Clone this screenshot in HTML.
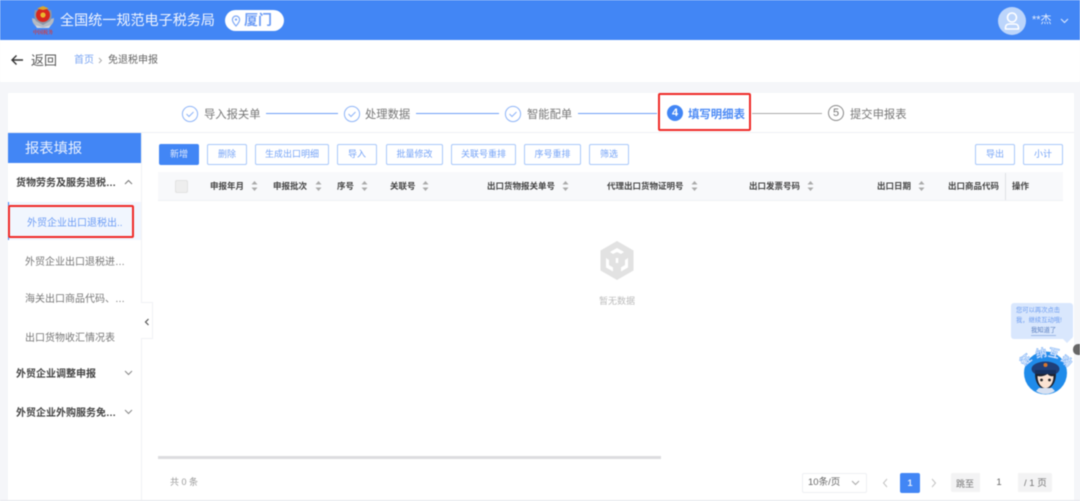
<!DOCTYPE html>
<html lang="zh">
<head>
<meta charset="utf-8">
<style>
html,body{margin:0;padding:0;width:1080px;height:501px;overflow:hidden;background:#f5f6f9;font-family:"Liberation Sans","Noto Sans CJK SC",sans-serif;}
.a{position:absolute;white-space:nowrap;}
#root{position:relative;width:1080px;height:501px;overflow:hidden;filter:blur(.45px);}
.btn{position:absolute;top:144px;height:19px;line-height:19px;border:1px solid #a9c8fa;border-radius:2px;background:#fff;color:#76a4f7;font-size:9px;text-align:center;box-sizing:content-box;}
.th{position:absolute;top:181px;font-size:8.5px;line-height:10px;color:#444;font-weight:700;white-space:nowrap;}
.st{position:absolute;font-size:11.3px;line-height:16px;color:#777;white-space:nowrap;}
.ln{position:absolute;top:113px;height:1.4px;background:#6f9ff6;}
.sort{position:absolute;top:179px;width:7px;height:14px;}
.m{position:absolute;font-size:10px;line-height:14px;color:#777;white-space:nowrap;}
.g{position:absolute;left:16px;font-size:10px;line-height:14px;color:#444;font-weight:700;white-space:nowrap;}
.arc{font-size:11px;font-weight:700;font-family:"Liberation Sans","Noto Sans CJK SC",sans-serif;fill:#f4f8ff;stroke:#7fb2f6;stroke-width:.6px;text-anchor:middle;}
</style>
</head>
<body>
<div id="root">
<!-- header -->
<div class="a" style="left:0;top:0;width:1080px;height:40px;background:#4286f5;"></div>
<svg class="a" style="left:30px;top:4px;" width="26" height="32" viewBox="0 0 26 32">
<path d="M2 14c0 6 4 10 11 10s11-4 11-10l-3 1-8 6-8-6z" fill="#b4bac4"/>
<path d="M5 6c-1 4-1 8 1 11l7 4 7-4c2-3 2-7 1-11z" fill="#8d96a5"/>
<circle cx="13" cy="11" r="7" fill="#d8281f"/>
<circle cx="13" cy="11" r="2.600" fill="#eab92e"/>
<path d="M7 4.500l6-2.500 6 2.500-6 1.500z" fill="#d9a62c"/>
<path d="M5 21l8 2.500 8-2.500-2 3H7z" fill="#d3d7dd"/>
<text x="13" y="30" text-anchor="middle" font-size="5" font-weight="700" fill="#d83a38" font-family="'Liberation Serif','Noto Serif CJK SC',serif">中国税务</text>
</svg>
<div class="a" style="left:60px;top:12px;font-size:14.100px;line-height:17px;color:#f1f5fe;">全国统一规范电子税务局</div>
<div class="a" style="left:225px;top:10px;width:59px;height:21px;border-radius:11px;background:#fff;"></div>
<svg class="a" style="left:231px;top:15px;" width="10" height="12" viewBox="0 0 10 12"><path d="M5 1a3.6 3.6 0 0 0-3.6 3.6C1.400 7 5 11 5 11s3.600-4 3.600-6.400A3.600 3.600 0 0 0 5 1z" fill="none" stroke="#7ea9f6" stroke-width="1.200"/><circle cx="5" cy="4.600" r="1.200" fill="#7ea9f6"/></svg>
<div class="a" style="left:244px;top:12px;font-size:14px;line-height:17px;color:#6c9cf5;font-weight:700;">厦门</div>
<div class="a" style="left:998px;top:7px;width:28px;height:28px;border-radius:50%;background:#bcd5fb;"></div>
<svg class="a" style="left:998px;top:7px;" width="28" height="28" viewBox="0 0 28 28"><circle cx="14" cy="10.500" r="4.500" fill="none" stroke="#fff" stroke-width="1.600"/><path d="M7.500 22v-1.500c0-2.200 1.800-3.500 4-3.500h5c2.200 0 4 1.300 4 3.500V22z" fill="none" stroke="#fff" stroke-width="1.600" stroke-linejoin="round"/></svg>
<div class="a" style="left:1032px;top:13px;font-size:11px;line-height:14px;color:#e4edfd;">**杰</div>
<svg class="a" style="left:1060px;top:18px;" width="9" height="6" viewBox="0 0 9 6"><path d="M1 1l3.500 3.500L8 1" fill="none" stroke="#dbe7fd" stroke-width="1.100"/></svg>

<!-- sub header -->
<div class="a" style="left:0;top:40px;width:1080px;height:42px;background:#fff;"></div>
<svg class="a" style="left:10px;top:54px;" width="14" height="12" viewBox="0 0 14 12"><path d="M13 6H2M6.500 1.500L2 6l4.500 4.500" fill="none" stroke="#333" stroke-width="1.400"/></svg>
<div class="a" style="left:31px;top:53px;font-size:13px;line-height:16px;color:#555;">返回</div>
<div class="a" style="left:74px;top:54px;font-size:10px;line-height:14px;color:#7ba6f3;">首页</div>
<svg class="a" style="left:98px;top:57px;" width="5" height="7" viewBox="0 0 5 7"><path d="M1 1l2.500 2.500L1 6" fill="none" stroke="#aaa" stroke-width=".9"/></svg>
<div class="a" style="left:108px;top:54px;font-size:10px;line-height:14px;color:#666;">免退税申报</div>

<!-- card -->
<div class="a" style="left:8px;top:93px;width:1066px;height:407px;background:#fff;"></div>
<div class="a" style="left:8px;top:132px;width:1066px;height:1px;background:#eef0f4;"></div>
<div class="a" style="left:0;top:500px;width:1080px;height:1px;background:#e6e8ec;"></div>

<!-- steps -->
<svg class="a" style="left:181px;top:104.500px;" width="18" height="18" viewBox="0 0 18 18"><circle cx="9" cy="9" r="7.600" fill="none" stroke="#8fb5f8" stroke-width="1"/><path d="M5.500 9l2.500 2.500 4.500-4.500" fill="none" stroke="#8fb5f8" stroke-width="1"/></svg>
<div class="st" style="left:204px;top:107px;">导入报关单</div>
<div class="ln" style="left:266px;width:72px;"></div>
<svg class="a" style="left:343px;top:104.500px;" width="18" height="18" viewBox="0 0 18 18"><circle cx="9" cy="9" r="7.600" fill="none" stroke="#8fb5f8" stroke-width="1"/><path d="M5.500 9l2.500 2.500 4.500-4.500" fill="none" stroke="#8fb5f8" stroke-width="1"/></svg>
<div class="st" style="left:365px;top:107px;">处理数据</div>
<div class="ln" style="left:416px;width:83px;"></div>
<svg class="a" style="left:504px;top:104.500px;" width="18" height="18" viewBox="0 0 18 18"><circle cx="9" cy="9" r="7.600" fill="none" stroke="#8fb5f8" stroke-width="1"/><path d="M5.500 9l2.500 2.500 4.500-4.500" fill="none" stroke="#8fb5f8" stroke-width="1"/></svg>
<div class="st" style="left:527px;top:107px;">智能配单</div>
<div class="ln" style="left:578px;width:79px;"></div>
<div class="a" style="left:658px;top:93px;width:93px;height:38px;box-sizing:border-box;border:2px solid #ef2a27;border-radius:2px;"></div>
<div class="a" style="left:667px;top:105px;width:16px;height:16px;border-radius:50%;background:#4286f5;color:#fff;font-size:11px;line-height:16px;text-align:center;font-weight:700;">4</div>
<div class="a" style="left:688px;top:107px;font-size:11.400px;line-height:16px;color:#4d8bf5;font-weight:700;">填写明细表</div>
<div class="a" style="left:752px;top:113px;width:70px;height:1px;background:#aaa;"></div>
<div class="a" style="left:828px;top:105px;width:14px;height:14px;border:1px solid #888;border-radius:50%;color:#777;font-size:11px;line-height:14px;text-align:center;">5</div>
<div class="st" style="left:850px;top:107px;">提交申报表</div>

<!-- sidebar -->
<div class="a" style="left:141px;top:133px;width:1px;height:367px;background:#f0f1f4;"></div>
<div class="a" style="left:8px;top:133px;width:133px;height:30px;background:#4286f5;"></div>
<div class="a" style="left:25px;top:140px;font-size:14.300px;line-height:19px;color:#e8f0fe;">报表填报</div>
<div class="g" style="top:177px;">货物劳务及服务退税…</div>
<svg class="a" style="left:124px;top:179px;" width="9" height="6" viewBox="0 0 9 6"><path d="M1 5l3.500-3.500L8 5" fill="none" stroke="#777" stroke-width="1"/></svg>
<div class="a" style="left:8px;top:202px;width:133px;height:38px;background:#f1f6fe;"></div>
<div class="a" style="left:8px;top:202px;width:1px;height:38px;background:#4286f5;"></div>
<div class="a" style="left:8px;top:205px;width:126px;height:33px;box-sizing:border-box;border:2px solid #ef2a27;border-radius:2px;"></div>
<div class="m" style="left:27px;top:217px;color:#6d9df5;">外贸企业出口退税出..</div>
<div class="m" style="left:25px;top:256px;">外贸企业出口退税进…</div>
<div class="m" style="left:25px;top:293px;">海关出口商品代码、…</div>
<div class="m" style="left:25px;top:332px;">出口货物收汇情况表</div>
<div class="g" style="top:368px;">外贸企业调整申报</div>
<svg class="a" style="left:124px;top:370px;" width="9" height="6" viewBox="0 0 9 6"><path d="M1 1l3.500 3.500L8 1" fill="none" stroke="#888" stroke-width="1"/></svg>
<div class="g" style="top:407px;">外贸企业外购服务免…</div>
<svg class="a" style="left:124px;top:409px;" width="9" height="6" viewBox="0 0 9 6"><path d="M1 1l3.500 3.500L8 1" fill="none" stroke="#888" stroke-width="1"/></svg>
<div class="a" style="left:141px;top:302px;width:12px;height:37px;background:#fff;border:1px solid #f0f1f4;border-left:none;box-sizing:border-box;"></div>
<svg class="a" style="left:144px;top:318px;" width="6" height="8" viewBox="0 0 6 8"><path d="M4.500 1L1.500 4l3 3" fill="none" stroke="#555" stroke-width="1.200"/></svg>

<!-- toolbar -->
<div class="btn" style="left:159px;width:38px;background:#4286f5;border-color:#4286f5;color:#dfe9fd;">新增</div>
<div class="btn" style="left:207px;width:38px;">删除</div>
<div class="btn" style="left:255px;width:72px;">生成出口明细</div>
<div class="btn" style="left:337px;width:38px;">导入</div>
<div class="btn" style="left:386px;width:55px;">批量修改</div>
<div class="btn" style="left:451px;width:63px;">关联号重排</div>
<div class="btn" style="left:524px;width:55px;">序号重排</div>
<div class="btn" style="left:589px;width:38px;">筛选</div>
<div class="btn" style="left:975px;width:38px;">导出</div>
<div class="btn" style="left:1023px;width:38px;">小计</div>

<!-- table head -->
<div class="a" style="left:158px;top:172px;width:905px;height:28px;background:#f8f9fb;border-bottom:1px solid #eff1f4;"></div>
<div class="a" style="left:175px;top:180px;width:11px;height:11px;background:#eeeeee;border:1px solid #e2e2e2;border-radius:2px;"></div>
<div class="th" style="left:210px;">申报年月</div>
<div class="th" style="left:273px;">申报批次</div>
<div class="th" style="left:337px;">序号</div>
<div class="th" style="left:390px;">关联号</div>
<div class="th" style="left:487px;">出口货物报关单号</div>
<div class="th" style="left:607px;">代理出口货物证明号</div>
<div class="th" style="left:749px;">出口发票号码</div>
<div class="th" style="left:877px;">出口日期</div>
<div class="th" style="left:948px;">出口商品代码</div>
<div class="th" style="left:1012px;">操作</div>
<div class="a" style="left:1005px;top:173px;width:1px;height:27px;background:#dfe1e5;"></div>
<svg class="sort" style="left:251px;" viewBox="0 0 7 14"><path d="M3.500 2L6.500 5.500H.5zM3.500 12L.5 8.500H6.500z" fill="#aaa"/></svg>
<svg class="sort" style="left:315px;" viewBox="0 0 7 14"><path d="M3.500 2L6.500 5.500H.5zM3.500 12L.5 8.500H6.500z" fill="#aaa"/></svg>
<svg class="sort" style="left:361px;" viewBox="0 0 7 14"><path d="M3.500 2L6.500 5.500H.5zM3.500 12L.5 8.500H6.500z" fill="#aaa"/></svg>
<svg class="sort" style="left:422px;" viewBox="0 0 7 14"><path d="M3.500 2L6.500 5.500H.5zM3.500 12L.5 8.500H6.500z" fill="#aaa"/></svg>
<svg class="sort" style="left:562px;" viewBox="0 0 7 14"><path d="M3.500 2L6.500 5.500H.5zM3.500 12L.5 8.500H6.500z" fill="#aaa"/></svg>
<svg class="sort" style="left:691px;" viewBox="0 0 7 14"><path d="M3.500 2L6.500 5.500H.5zM3.500 12L.5 8.500H6.500z" fill="#aaa"/></svg>
<svg class="sort" style="left:807px;" viewBox="0 0 7 14"><path d="M3.500 2L6.500 5.500H.5zM3.500 12L.5 8.500H6.500z" fill="#aaa"/></svg>
<svg class="sort" style="left:918px;" viewBox="0 0 7 14"><path d="M3.500 2L6.500 5.500H.5zM3.500 12L.5 8.500H6.500z" fill="#aaa"/></svg>

<!-- empty state -->
<svg class="a" style="left:599px;top:240px;" width="36" height="41" viewBox="0 0 36 41">
<path d="M18 1l16.500 9.500v20L18 40 1.500 30.500v-20z" fill="#e2e2e2"/>
<path d="M11 12l7-4 7 4-3 2-4-2-4 2zM7 18l3 2v5l4 2.500v4l-7-4zM29 18l-3 2v5l-4 2.500v4l7-4z" fill="#fff"/>
<path d="M18 18v5" stroke="#fff" stroke-width="2.500"/>
</svg>
<div class="a" style="left:599px;top:295px;font-size:9px;line-height:12px;color:#bbb;">暂无数据</div>

<!-- scrollbar -->
<div class="a" style="left:158px;top:456px;width:503px;height:3px;background:#dcdcdf;"></div>

<!-- footer -->
<div class="a" style="left:170px;top:476px;font-size:9px;line-height:12px;color:#999;">共 0 条</div>
<div class="a" style="left:802px;top:473px;width:63px;height:18px;border:1px solid #eef0f3;box-sizing:content-box;background:#fff;border-radius:2px;"></div>
<div class="a" style="left:808px;top:477px;font-size:9.500px;line-height:12px;color:#666;">10条/页</div>
<svg class="a" style="left:851px;top:480px;" width="9" height="6" viewBox="0 0 9 6"><path d="M1 1l3.500 3.500L8 1" fill="none" stroke="#aaa" stroke-width="1"/></svg>
<svg class="a" style="left:882px;top:478px;" width="6" height="10" viewBox="0 0 6 10"><path d="M5 1L1.500 5 5 9" fill="none" stroke="#c4c4c4" stroke-width="1"/></svg>
<div class="a" style="left:900px;top:473px;width:20px;height:20px;background:#4286f5;border-radius:2px;color:#e4edfd;font-size:9px;line-height:20px;text-align:center;font-weight:700;">1</div>
<svg class="a" style="left:931px;top:478px;" width="6" height="10" viewBox="0 0 6 10"><path d="M1 1l3.500 4L1 9" fill="none" stroke="#c4c4c4" stroke-width="1"/></svg>
<div class="a" style="left:951px;top:473px;width:101px;height:19px;background:#f3f3f4;border-radius:2px;"></div>
<div class="a" style="left:956px;top:478px;font-size:9px;line-height:12px;color:#777;">跳至</div>
<div class="a" style="left:980px;top:473px;width:38px;height:19px;background:#fff;border:none;color:#666;font-size:9.500px;line-height:20px;text-align:center;">1</div>
<div class="a" style="left:1024px;top:478px;font-size:9.500px;line-height:12px;color:#777;">/ 1 页</div>

<!-- assistant -->
<div class="a" style="left:1011px;top:303px;width:62px;height:36px;background:#d9e7fd;border-radius:3px;"></div>
<div class="a" style="left:1063px;top:339px;width:0;height:0;border-left:4px solid transparent;border-right:4px solid transparent;border-top:4px solid #d9e7fd;"></div>
<div class="a" style="left:1016px;top:306px;font-size:6.300px;line-height:10px;color:#6c9cf0;">您可以再次点击</div>
<div class="a" style="left:1016px;top:316px;font-size:6.300px;line-height:10px;color:#6c9cf0;">我，继续互动哦!</div>
<div class="a" style="left:1031px;top:326px;font-size:6.300px;line-height:9px;color:#5a7fc0;border-bottom:1px solid #9db8e6;">我知道了</div>
<div class="a" style="left:1073px;top:344px;width:7px;height:11px;background:#666;border-radius:5px 0 0 5px;"></div>
<svg class="a" style="left:1018px;top:344px;" width="56" height="54" viewBox="0 0 56 54">
<circle cx="27.500" cy="29" r="21.500" fill="#1f8bea"/>
<ellipse cx="27.500" cy="25" rx="14" ry="7.500" fill="#1f3e78"/>
<rect x="17" y="26" width="21" height="4" fill="#16315f"/>
<circle cx="27.500" cy="21" r="2" fill="#d9752c"/>
<path d="M17 30c0 8 4 15 10.500 15S38 38 38 30z" fill="#1e2330"/>
<path d="M19.500 32c0 6 3 12 8 12s8-6 8-12c-3 1-5-1-6-2-3 2-7 3-10 2z" fill="#fbe3d2"/>
<circle cx="23.500" cy="36" r="1.400" fill="#222"/>
<circle cx="31.500" cy="36" r="1.400" fill="#222"/>
<path d="M18 47c3 2 6 3 9.500 3s6.500-1 9.500-3l-3-3H21z" fill="#d7e1f2"/>
<text class="arc" transform="translate(10 19) rotate(-38)">征</text>
<text class="arc" transform="translate(24 13) rotate(-12)">纳</text>
<text class="arc" transform="translate(35 13) rotate(12)">互</text>
<text class="arc" transform="translate(46 20) rotate(38)">动</text>
</svg>
</div>
</body>
</html>
